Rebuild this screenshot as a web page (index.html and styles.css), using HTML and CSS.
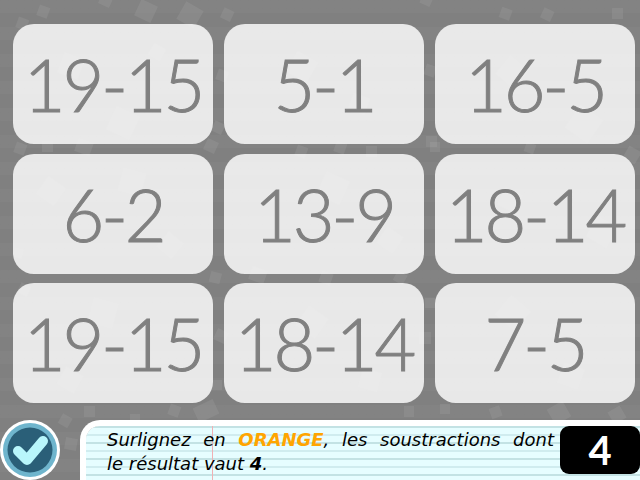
FILE: index.html
```html
<!DOCTYPE html>
<html lang="fr">
<head>
<meta charset="utf-8">
<title>Soustractions</title>
<link rel="stylesheet" href="styles.css">
</head>
<body>
<div class="stage">
  <svg class="confetti" width="640" height="480" viewBox="0 0 640 480" aria-hidden="true">
    <g fill="#fff" fill-opacity="0.07">
      <rect x="38" y="6" width="11" height="11" transform="rotate(20 43 11)"/>
      <rect x="100" y="-6" width="12" height="12" transform="rotate(25 106 0)"/>
      <rect x="137" y="2" width="18" height="18" transform="rotate(25 146 11)"/>
      <rect x="180" y="5" width="20" height="20" transform="rotate(30 190 15)"/>
      <rect x="222" y="9" width="11" height="11" transform="rotate(25 227 14)"/>
      <rect x="17" y="18" width="11" height="11" transform="rotate(20 22 23)"/>
      <rect x="421" y="-6" width="11" height="11" transform="rotate(25 426 0)"/>
      <rect x="500" y="8" width="11" height="11" transform="rotate(20 505 14)"/>
      <rect x="542" y="9" width="11" height="11" transform="rotate(25 547 14)"/>
      <rect x="612" y="8" width="11" height="11"/>
      <rect x="14" y="248" width="9" height="10" transform="rotate(15 18 253)"/>
      <rect x="217" y="70" width="11" height="11" transform="rotate(20 222 75)"/>
      <rect x="425" y="65" width="11" height="11" transform="rotate(20 430 70)"/>
      <rect x="426" y="136" width="11" height="11"/>
      <rect x="213" y="122" width="11" height="11" transform="rotate(25 218 127)"/>
      <rect x="15" y="143" width="11" height="11" transform="rotate(20 20 148)"/>
      <rect x="42" y="141" width="11" height="11"/>
      <rect x="76" y="140" width="16" height="14" transform="rotate(20 84 147)"/>
      <rect x="205" y="140" width="12" height="12" transform="rotate(25 211 146)"/>
      <rect x="296" y="146" width="11" height="11" transform="rotate(20 301 151)"/>
      <rect x="335" y="142" width="11" height="11" transform="rotate(20 340 147)"/>
      <rect x="366" y="146" width="11" height="11"/>
      <rect x="430" y="142" width="10" height="10"/>
      <rect x="525" y="143" width="10" height="10" transform="rotate(20 530 148)"/>
      <rect x="625" y="148" width="14" height="14" transform="rotate(30 632 155)"/>
      <rect x="210" y="272" width="11" height="11" transform="rotate(15 215 277)"/>
      <rect x="250" y="268" width="16" height="14" transform="rotate(20 258 275)"/>
      <rect x="320" y="272" width="12" height="12" transform="rotate(20 326 278)"/>
      <rect x="395" y="272" width="11" height="11" transform="rotate(30 400 277)"/>
      <rect x="19" y="284" width="11" height="11" transform="rotate(25 24 289)"/>
      <rect x="419" y="332" width="12" height="12"/>
      <rect x="425" y="298" width="10" height="10"/>
      <rect x="215" y="330" width="12" height="12" transform="rotate(25 221 336)"/>
      <rect x="212" y="380" width="10" height="10"/>
      <rect x="84" y="406" width="11" height="11"/>
      <rect x="130" y="414" width="10" height="10"/>
      <rect x="169" y="405" width="11" height="11" transform="rotate(20 174 410)"/>
      <rect x="195" y="403" width="22" height="16" transform="rotate(-25 206 411)"/>
      <rect x="60" y="415" width="11" height="11" transform="rotate(30 65 420)"/>
      <rect x="65" y="438" width="12" height="12" transform="rotate(10 71 444)"/>
      <rect x="404" y="406" width="10" height="11"/>
      <rect x="490" y="407" width="11" height="11" transform="rotate(-20 495 412)"/>
      <rect x="550" y="404" width="18" height="18" transform="rotate(-30 559 413)"/>
      <rect x="610" y="408" width="14" height="14" transform="rotate(-30 617 415)"/>
      <rect x="440" y="404" width="10" height="10"/>
      <rect x="60" y="55" width="22" height="22" transform="rotate(20 71 66)"/>
      <rect x="110" y="110" width="26" height="26" transform="rotate(25 123 123)"/>
      <rect x="150" y="45" width="14" height="14" transform="rotate(30 157 52)"/>
      <rect x="40" y="180" width="22" height="22" transform="rotate(35 51 191)"/>
      <rect x="120" y="170" width="24" height="24" transform="rotate(15 132 182)"/>
      <rect x="160" y="235" width="20" height="20" transform="rotate(40 170 245)"/>
      <rect x="290" y="55" width="24" height="24" transform="rotate(30 302 67)"/>
      <rect x="350" y="95" width="18" height="18" transform="rotate(20 359 104)"/>
      <rect x="320" y="175" width="26" height="26" transform="rotate(25 333 188)"/>
      <rect x="380" y="230" width="20" height="20" transform="rotate(35 390 240)"/>
      <rect x="500" y="60" width="24" height="24" transform="rotate(40 512 72)"/>
      <rect x="570" y="110" width="28" height="28" transform="rotate(35 584 124)"/>
      <rect x="500" y="190" width="20" height="20" transform="rotate(25 510 200)"/>
      <rect x="590" y="220" width="24" height="24" transform="rotate(30 602 232)"/>
      <rect x="90" y="300" width="26" height="26" transform="rotate(15 103 313)"/>
      <rect x="60" y="370" width="20" height="20" transform="rotate(30 70 380)"/>
      <rect x="300" y="310" width="24" height="24" transform="rotate(35 312 322)"/>
      <rect x="360" y="370" width="20" height="20" transform="rotate(15 370 380)"/>
      <rect x="500" y="300" width="26" height="26" transform="rotate(40 513 313)"/>
      <rect x="560" y="365" width="22" height="22" transform="rotate(20 571 376)"/>
    </g>
  </svg>

  <main class="grid">
    <div class="card">19-15</div>
    <div class="card">5-1</div>
    <div class="card">16-5</div>
    <div class="card">6-2</div>
    <div class="card">13-9</div>
    <div class="card">18-14</div>
    <div class="card">19-15</div>
    <div class="card">18-14</div>
    <div class="card">7-5</div>
  </main>

  <footer class="footer">
    <button class="check" type="button" aria-label="Valider">
      <svg width="60" height="60" viewBox="0 0 60 60">
        <circle cx="30" cy="30" r="30" fill="#fff"/>
        <circle cx="30" cy="30" r="27" fill="#6fb5cd"/>
        <circle cx="30" cy="30" r="22.5" fill="#2a5f78"/>
        <path d="M18 31 L27 40 L43 21" fill="none" stroke="#b8f6fb" stroke-width="10" stroke-linecap="round" stroke-linejoin="round"/>
      </svg>
    </button>
    <section class="note">
      <p class="instruction">
        <span class="line line-full">Surlignez en <span class="orange">ORANGE</span>, les soustractions dont</span>
        <span class="line">le résultat vaut <b>4</b>.</span>
      </p>
      <div class="answer">4</div>
    </section>
  </footer>
</div>
</body>
</html>
```

FILE: styles.css
```css
* { box-sizing: border-box; }

html, body {
  margin: 0;
  padding: 0;
  width: 640px;
  height: 480px;
  overflow: hidden;
}

.stage {
  position: relative;
  width: 640px;
  height: 480px;
  display: flex;
  flex-direction: column;
  justify-content: space-between;
  background-color: #808080;
  background-image:
    repeating-linear-gradient(180deg, rgba(255,255,255,0.025) 0 13px, rgba(0,0,0,0) 13px 27px);
}

.confetti {
  position: absolute;
  left: 0;
  top: 0;
}

.grid {
  position: relative;
  display: grid;
  grid-template-columns: repeat(3, 200px);
  grid-auto-rows: 120px;
  column-gap: 11px;
  row-gap: 9.5px;
  padding: 24px 0 0 13px;
}

.card {
  display: flex;
  align-items: center;
  justify-content: center;
  border-radius: 21px;
  background: rgba(255,255,255,0.82);
  color: #808080;
  font-family: "Lato", "Liberation Sans", sans-serif;
  font-weight: 300;
  font-size: 72px;
  letter-spacing: -3px;
  line-height: 1;
  white-space: nowrap;
  -webkit-text-stroke: 1px #808080;
}

.footer {
  position: relative;
  display: flex;
  align-items: flex-end;
  height: 60px;
}

.check {
  width: 60px;
  height: 60px;
  padding: 0;
  margin: 0 20px 0 0;
  border: 0;
  background: none;
  display: block;
}

.check svg { display: block; }

.note {
  flex: 1;
  height: 60px;
  display: flex;
  align-items: flex-start;
  justify-content: space-between;
  border-top-left-radius: 20px;
  background-color: #e6fdff;
  background-image:
    linear-gradient(90deg, transparent 126px, #f0b0b4 126px 127px, transparent 127px),
    repeating-linear-gradient(180deg, #c3e2e4 0 2px, #e6fdff 2px 8px, #d0ecef 8px 10px, #e6fdff 10px 16px);
  background-clip: padding-box;
  border: solid #fff;
  border-width: 6px 0 0 6px;
  padding-left: 21px;
}

.instruction {
  margin: 0;
  width: 447px;
  padding-top: 2px;
  font-family: "DejaVu Sans", "Liberation Sans", sans-serif;
  font-style: italic;
  font-size: 18px;
  line-height: 24px;
  color: #000;
}

.line {
  display: block;
  white-space: nowrap;
}

.line-full {
  white-space: normal;
  text-align: justify;
  text-align-last: justify;
}

.orange {
  color: #ffa500;
  font-weight: 700;
}

.answer {
  width: 80px;
  height: 48px;
  border-radius: 9px;
  background: #000;
  color: #fff;
  font-family: "Lato", "Liberation Sans", sans-serif;
  font-weight: 700;
  font-size: 40px;
  line-height: 48px;
  text-align: center;
}
```
